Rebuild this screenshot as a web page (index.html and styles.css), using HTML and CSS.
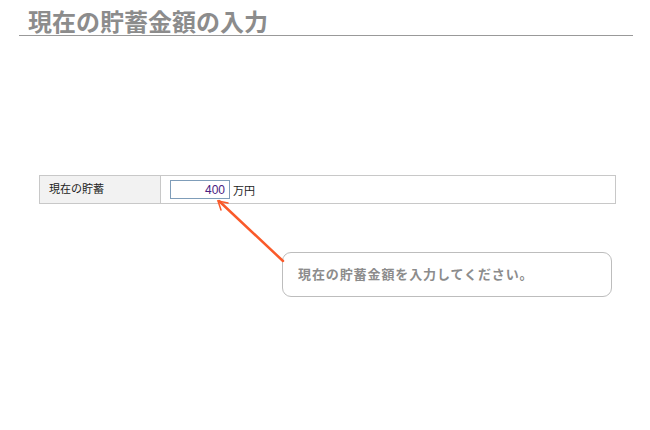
FILE: index.html
```html
<!DOCTYPE html>
<html>
  <head>
    <meta charset="utf-8">
    <title>現在の貯蓄金額の入力</title>
    <link rel="stylesheet" href="styles.css">
  </head>
  <body>
    <h1 class="page-title">現在の貯蓄金額の入力</h1>

    <div class="form-row">
      <div class="form-label">現在の貯蓄</div>
      <div class="form-value">
        <input class="amount" type="text" value="400">
        <span class="unit">万円</span>
      </div>
    </div>

    <div class="callout">現在の貯蓄金額を入力してください。</div>

    <!-- pointer from the note to the input -->
    <svg class="pointer" width="650" height="430" viewBox="0 0 650 430">
      <line x1="283" y1="261" x2="219" y2="201" stroke="#fa5a2a" stroke-width="2.5" stroke-linecap="round"/>
      <polyline points="221,210 218,201 228,203" fill="none" stroke="#fa5a2a" stroke-width="1.5" stroke-linecap="round"/>
    </svg>
  </body>
</html>
```

FILE: styles.css
```css
body {
  margin: 0;
  font-family: "Noto Sans CJK JP", "Noto Sans", sans-serif;
  position: relative;
  width: 650px;
  height: 430px;
}
.page-title {
  margin: 0 17px 0 19px;
  padding: 7px 0 0 9px;
  height: 28px;
  font-size: 24px;
  line-height: 28px;
  font-weight: bold;
  color: #8c8c8c;
  border-bottom: 1px solid #999;
}
.form-row {
  display: flex;
  margin: 139px 0 0 39px;
  width: 575px;
  height: 27px;
  border: 1px solid #c8c8c8;
}
.form-label {
  width: 111px;
  padding-left: 9px;
  background-color: #f2f2f2;
  border-right: 1px solid #c8c8c8;
  font-size: 11px;
  line-height: 25px;
  color: #222;
}
.form-value {
  display: flex;
  align-items: center;
  gap: 3px;
  padding-left: 9px;
}
.amount {
  box-sizing: border-box;
  width: 60px;
  height: 19px;
  margin: 0;
  padding: 0 4px;
  border: 1px solid #7f9db9;
  text-align: right;
  font-family: "Liberation Sans", sans-serif;
  font-size: 12px;
  color: #4a2080;
}
.unit {
  font-size: 11px;
  color: #222;
}
.callout {
  box-sizing: border-box;
  margin: 48px 0 0 282px;
  width: 330px;
  height: 45px;
  padding-left: 15px;
  border: 1px solid #bdbdbd;
  border-radius: 9px;
  font-size: 13px;
  letter-spacing: 0.9px;
  line-height: 42px;
  font-weight: bold;
  color: #8c8c8c;
}
.pointer {
  position: absolute;
  left: 0;
  top: 0;
}
```
